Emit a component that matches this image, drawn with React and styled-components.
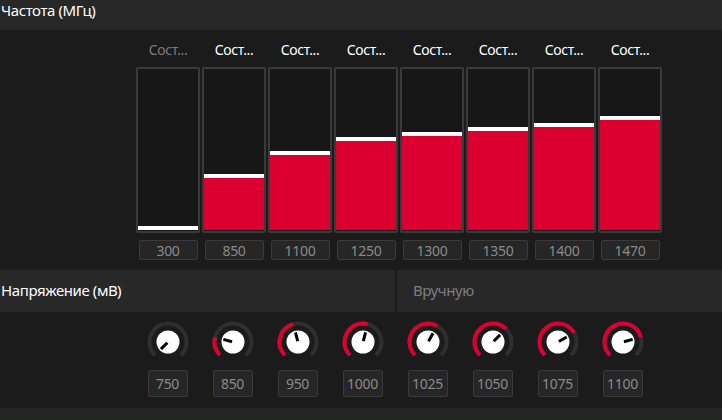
import React from "react";
import styled, { createGlobalStyle } from "styled-components";

const GlobalStyle = createGlobalStyle`
  html, body {
    margin: 0;
    padding: 0;
    background: #1b1b1b;
  }
  body {
    width: 722px;
    height: 420px;
    overflow: hidden;
    font-family: "Noto Sans", "Open Sans", sans-serif;
  }
`;

const states = [
  { value: 300, active: false },
  { value: 850, active: true },
  { value: 1100, active: true },
  { value: 1250, active: true },
  { value: 1300, active: true },
  { value: 1350, active: true },
  { value: 1400, active: true },
  { value: 1470, active: true },
];

const voltages = [750, 850, 950, 1000, 1025, 1050, 1075, 1100];

const Page = styled.div`
  width: 722px;
  height: 420px;
  display: flex;
  flex-direction: column;
  background: #1b1b1b;
  color: #fff;
`;

const SectionHeader = styled.div`
  height: 30px;
  background: #272727;
  display: flex;
  align-items: flex-start;
  padding: 0 0 0 1px;
  box-sizing: border-box;
  font-size: 15px;
  letter-spacing: -0.4px;
  color: #fff;
`;

const VoltHeader = styled.div`
  height: 42px;
  display: grid;
  grid-template-columns: 395px 1fr;
  column-gap: 2px;
  background: #1b1b1b;
`;

const VoltCell = styled.div`
  background: #282828;
  display: flex;
  align-items: center;
  padding-left: ${(p) => (p.$muted ? "16px" : "1px")};
  padding-bottom: 2px;
  font-size: 15px;
  letter-spacing: -0.4px;
  color: ${(p) => (p.$muted ? "#7d7d7d" : "#fff")};
`;

const BarsArea = styled.div`
  height: 240px;
  padding: 9px 0 0 136px;
  box-sizing: border-box;
  display: grid;
  grid-template-columns: repeat(8, 64px);
  column-gap: 2px;
  align-content: start;
`;

const Column = styled.div`
  display: flex;
  flex-direction: column;
  align-items: center;
`;

const StateLabel = styled.div`
  height: 28px;
  font-size: 14px;
  letter-spacing: -0.4px;
  color: ${(p) => (p.$active ? "#ffffff" : "#7a7a7a")};
  line-height: 22px;
`;

const BarFrame = styled.div`
  width: 64px;
  height: 166px;
  box-sizing: border-box;
  border: 2px solid #3a3a3a;
  border-radius: 2px;
  background: #171717;
  padding-bottom: 1px;
  display: flex;
  flex-direction: column;
  justify-content: flex-end;
`;

const Fill = styled.div`
  background: #dc0031;
  border-top: 4px solid #ffffff;
`;

const ValueBox = styled.div`
  width: ${(p) => p.$w || 59}px;
  height: ${(p) => p.$h || 20}px;
  box-sizing: border-box;
  margin-top: ${(p) => p.$mt || 7}px;
  border: 1px solid #3a3a3a;
  border-radius: 2px;
  background: #262626;
  color: #8a8a8a;
  font-size: 14px;
  display: flex;
  align-items: center;
  justify-content: center;
  letter-spacing: -0.3px;
`;

const KnobArea = styled.div`
  height: 96px;
  padding: 9px 0 0 135px;
  box-sizing: border-box;
  display: grid;
  grid-template-columns: repeat(8, 65px);
  align-content: start;
`;

const Footer = styled.div`
  flex: 1;
  background: #232523;
`;

const KnobSvg = styled.svg`
  display: block;
`;

const polar = (cx, cy, r, deg) => {
  const a = ((deg - 90) * Math.PI) / 180;
  return [cx + r * Math.cos(a), cy + r * Math.sin(a)];
};

const arc = (cx, cy, r, from, to) => {
  const [x1, y1] = polar(cx, cy, r, from);
  const [x2, y2] = polar(cx, cy, r, to);
  const large = to - from > 180 ? 1 : 0;
  return `M ${x1} ${y1} A ${r} ${r} 0 ${large} 1 ${x2} ${y2}`;
};

const Knob = ({ value }) => {
  const frac = (value - 750) / 450;
  const angle = -135 + frac * 270;
  const [px, py] = polar(21, 21, 10, angle);
  const [sx, sy] = polar(21, 21, 1, angle);
  return (
    <KnobSvg width="42" height="42" viewBox="0 0 42 42">
      <path d={arc(21, 21, 18.5, -135, 135)} stroke="#2f2f2f" strokeWidth="4" fill="none" />
      {frac > 0 && (
        <path d={arc(21, 21, 18.5, -135, angle)} stroke="#dc0031" strokeWidth="4" fill="none" />
      )}
      <circle cx="21" cy="21" r="11.5" fill="#ffffff" />
      <line x1={sx} y1={sy} x2={px} y2={py} stroke="#000" strokeWidth="3" />
    </KnobSvg>
  );
};

const App = () => {
  return (
    <Page>
      <GlobalStyle />
      <SectionHeader>Частота (МГц)</SectionHeader>
      <BarsArea>
        {states.map((s) => (
          <Column key={s.value}>
            <StateLabel $active={s.active}>Сост...</StateLabel>
            <BarFrame>
              <Fill style={{ height: `${Math.round((s.value - 300) * 0.094)}px` }} />
            </BarFrame>
            <ValueBox>{s.value}</ValueBox>
          </Column>
        ))}
      </BarsArea>
      <VoltHeader>
        <VoltCell>Напряжение (мВ)</VoltCell>
        <VoltCell $muted>Вручную</VoltCell>
      </VoltHeader>
      <KnobArea>
        {voltages.map((v) => (
          <Column key={v}>
            <Knob value={v} />
            <ValueBox $w={40} $h={27} $mt={7}>
              {v}
            </ValueBox>
          </Column>
        ))}
      </KnobArea>
      <Footer />
    </Page>
  );
};

export default App;
